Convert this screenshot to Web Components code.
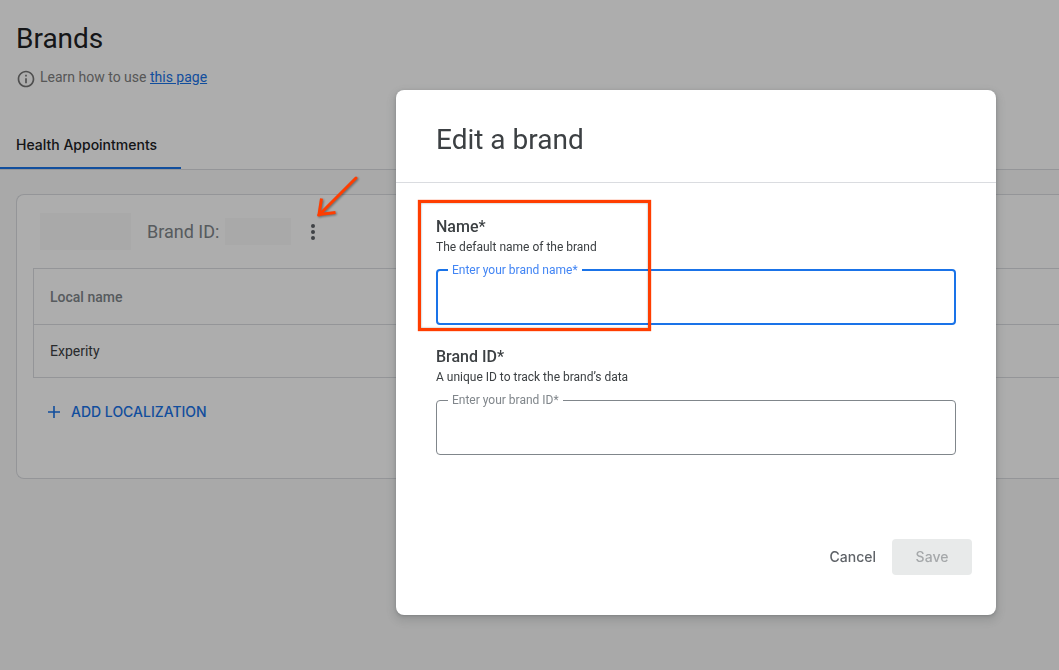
<!DOCTYPE html>
<html lang="en">
<head>
<meta charset="utf-8">
<title>Brands</title>
<style>
  html, body { margin: 0; min-height: 100%; }
  body {
    font-family: Roboto, "Liberation Sans", sans-serif;
    color: #3c4043;
    overflow: hidden;
    --line: #dadce0;
    --blue: #1a73e8;
    --mark: #ff3d00;
    --button-font: Inter, "Liberation Sans", sans-serif;
  }
</style>
</head>
<body>
<brands-page>
  <brand-card><span slot="row">Experity</span></brand-card>
</brands-page>
<modal-dialog heading="Edit a brand">
  <brand-field class="marked" active heading="Name*" hint="The default name of the brand" label="Enter your brand name*"></brand-field>
  <brand-field heading="Brand ID*" hint="A unique ID to track the brand’s data" label="Enter your brand ID*"></brand-field>
</modal-dialog>

<script>
function define(name, html, setup) {
  const template = document.createElement('template');
  template.innerHTML = html;
  customElements.define(name, class extends HTMLElement {
    constructor() {
      super();
      this.attachShadow({ mode: 'open' }).append(template.content.cloneNode(true));
    }
    connectedCallback() { if (setup) setup(this, this.shadowRoot); }
  });
}

define('brands-page', `
  <style>
    :host { display: flex; flex-direction: column; min-height: 100vh; background: #fff; }
    header { padding: 21px 16px 32px; }
    h1 { margin: 0 0 10px; font-size: 28px; font-weight: 400; line-height: 36px; color: #202124; }
    p { display: flex; align-items: flex-start; gap: 4px; min-height: 22px; margin: 0; font-size: 14px; line-height: 20px; color: #808080; }
    svg { align-self: flex-end; width: 20px; height: 20px; fill: #757575; }
    a { color: var(--blue); }
    nav { display: flex; border-bottom: 1px solid var(--line); }
    button {
      padding: 14px 24px 12px 16px; border: 0; border-bottom: 2px solid var(--blue); background: none;
      font: 500 14px/20px var(--button-font); color: #202124;
    }
    main { flex: 1; padding: 24px 0 24px 16px; background: #f9f9f9; }
  </style>
  <header>
    <h1>Brands</h1>
    <p>
      <svg viewBox="0 0 24 24" aria-hidden="true"><path d="M11 7h2v2h-2zm0 4h2v6h-2zm1-9C6.480 2 2 6.480 2 12s4.480 10 10 10 10-4.480 10-10S17.520 2 12 2zm0 18c-4.410 0-8-3.590-8-8s3.590-8 8-8 8 3.590 8 8-3.590 8-8 8z"/></svg>
      <span>Learn how to use <a href="#help">this page</a></span>
    </p>
  </header>
  <nav><button type="button">Health Appointments</button></nav>
  <main><slot></slot></main>
`);

define('brand-card', `
  <style>
    :host {
      display: block; padding-bottom: 48px; background: #fff;
      border: 1px solid var(--line); border-right: 0; border-radius: 8px 0 0 8px;
    }
    .head { display: flex; align-items: center; height: 73px; padding-left: 23px; }
    .blank { background: #f9f9f9; }
    .name { width: 91px; height: 37px; }
    .id { width: 66px; height: 27px; }
    h2 { margin: 0 6px 0 16px; font-size: 18px; font-weight: 400; line-height: 24px; color: #80868b; }
    .menu { display: flex; margin-left: 10px; padding: 0; border: 0; background: none; }
    .menu svg { width: 24px; height: 24px; fill: #5f6368; }
    .table { padding-left: 16px; }
    table { width: 100%; border: 1px solid var(--line); border-right: 0; border-spacing: 0; font-size: 14px; line-height: 20px; }
    th, td { padding: 0 16px; text-align: left; }
    th { height: 55px; border-bottom: 1px solid var(--line); font-weight: 500; color: #80868b; }
    td { height: 52px; }
    .add {
      display: flex; align-items: center; gap: 8px; height: 36px; margin: 16px 0 0 28px; padding: 0;
      border: 0; background: none; font: 500 14px/20px var(--button-font); color: var(--blue);
    }
    .add svg { width: 18px; height: 18px; fill: none; stroke: currentColor; stroke-width: 1.6; }
  </style>
  <div class="head">
    <div class="blank name"></div>
    <h2>Brand ID:</h2>
    <div class="blank id"></div>
    <button class="menu" type="button" aria-label="More options">
      <svg viewBox="0 0 24 24"><circle cx="12" cy="6" r="2"/><circle cx="12" cy="12" r="2"/><circle cx="12" cy="18" r="2"/></svg>
    </button>
  </div>
  <div class="table">
    <table>
      <thead><tr><th scope="col">Local name</th></tr></thead>
      <tbody><tr><td><slot name="row"></slot></td></tr></tbody>
    </table>
  </div>
  <button class="add" type="button">
    <svg viewBox="0 0 18 18" aria-hidden="true"><path d="M9 3v12M3 9h12"/></svg>
    ADD LOCALIZATION
  </button>
`);

define('modal-dialog', `
  <style>
    :host {
      position: fixed; inset: 0; display: flex; justify-content: flex-end; align-items: flex-start;
      padding: 90px 63px 0; background: rgba(0, 0, 0, .32);
    }
    section {
      width: 100%; max-width: 600px; background: #fff; border-radius: 8px;
      box-shadow: 0 1px 3px rgba(60, 64, 67, .3), 0 4px 8px 3px rgba(60, 64, 67, .15);
    }
    h2 {
      margin: 0; padding: 32px 40px 24px; border-bottom: 1px solid var(--line);
      font-size: 28px; font-weight: 400; line-height: 36px;
    }
    .body { display: flex; flex-direction: column; gap: 20px; padding: 32px 40px 0; }
    footer { display: flex; justify-content: flex-end; padding: 84px 24px 40px; }
    button {
      height: 36px; padding: 0 16px; border: 0; border-radius: 4px; background: none;
      font: 500 14px/20px var(--button-font); color: #5f6368;
    }
    button:disabled { width: 80px; background: #e8eaea; color: #a5a8aa; }
    .arrow { position: absolute; left: 310px; top: 170px; width: 56px; height: 56px; overflow: visible; fill: none; stroke: var(--mark); stroke-width: 3; filter: drop-shadow(1px 1px 1px rgba(0, 0, 0, .4)); }
  </style>
  <svg class="arrow" viewBox="0 0 56 56" aria-hidden="true"><path stroke-linecap="round" d="M46 8 9 45"/><path d="M11.500 28.500 9 44.500 25.500 42.500"/></svg>
  <section role="dialog" aria-modal="true" aria-labelledby="title">
    <h2 id="title"></h2>
    <div class="body"><slot></slot></div>
    <footer>
      <button type="button">Cancel</button>
      <button type="button" disabled>Save</button>
    </footer>
  </section>
`, (host, root) => { root.querySelector('h2').textContent = host.getAttribute('heading'); });

define('brand-field', `
  <style>
    :host { display: block; position: relative; }
    h3 { margin: 0; font-size: 16px; font-weight: 500; line-height: 24px; }
    p { margin: 0 0 6px; font-size: 12px; line-height: 16px; }
    fieldset { box-sizing: border-box; height: 64px; margin: 0; padding: 0 11px; border: 1px solid #80868b; border-radius: 4px; }
    legend { padding: 0 4px; font-size: 12px; line-height: 18px; color: #80868b; }
    input { box-sizing: border-box; width: 100%; height: 40px; padding: 0 4px; border: 0; outline: 0; background: none; font: 16px/24px Roboto, sans-serif; color: #3c4043; }
    :host([active]) fieldset { padding: 0 10px; border: 2px solid var(--blue); }
    :host([active]) legend { color: #4285f4; }
    :host(.marked)::after {
      content: ""; position: absolute; left: -18px; top: -15px; width: 227px; height: 125px;
      border: 3px solid var(--mark); box-shadow: 0 0 1px var(--mark), inset 0 0 2px rgba(0, 0, 0, .4); pointer-events: none;
    }
  </style>
  <h3></h3>
  <p id="hint"></p>
  <fieldset>
    <legend><label for="box"></label></legend>
    <input id="box" type="text" aria-describedby="hint">
  </fieldset>
`, (host, root) => {
  root.querySelector('h3').textContent = host.getAttribute('heading');
  root.querySelector('p').textContent = host.getAttribute('hint');
  root.querySelector('label').textContent = host.getAttribute('label');
});
</script>
</body>
</html>
